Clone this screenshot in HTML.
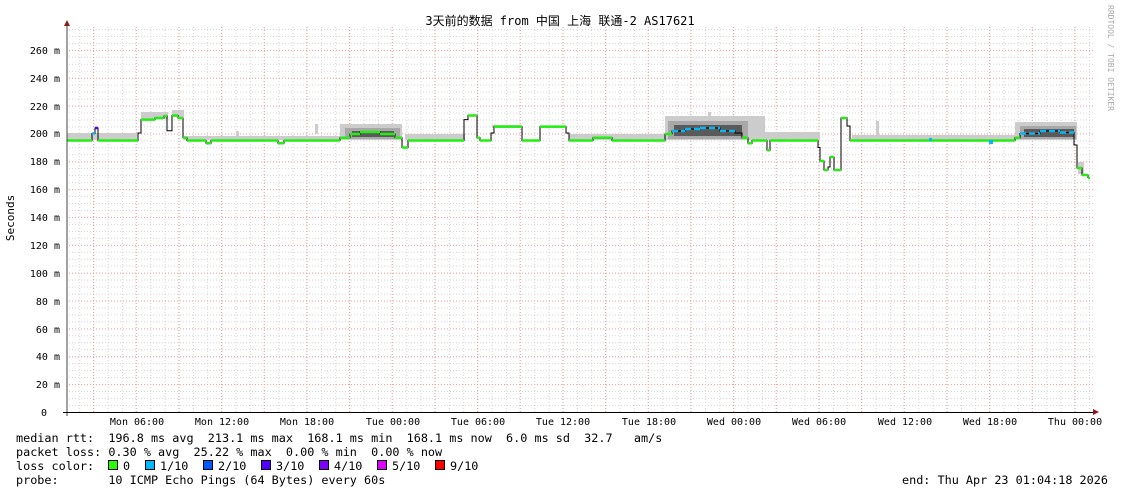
<!DOCTYPE html>
<html><head><meta charset="utf-8"><style>
html,body{margin:0;padding:0;background:#fff;}
svg{display:block;}
text{font-family:"DejaVu Sans Mono","Liberation Mono","Noto Sans CJK SC",monospace;fill:#000;white-space:pre;}
</style></head><body>
<svg width="1121" height="494" viewBox="0 0 1121 494" xmlns="http://www.w3.org/2000/svg" xml:space="preserve">
<defs>
<pattern id="vmin" patternUnits="userSpaceOnUse" x="79.22" y="0" width="14.222" height="3">
<line x1="0.5" y1="0" x2="0.5" y2="1" stroke="#d4d4d4" stroke-width="1"/></pattern>
<pattern id="hmin" patternUnits="userSpaceOnUse" x="0" y="8.08" width="3" height="6.9615">
<line x1="0" y1="0.5" x2="1" y2="0.5" stroke="#d4d4d4" stroke-width="1"/></pattern>
<pattern id="vmaj" patternUnits="userSpaceOnUse" x="93" y="0" width="42.667" height="3">
<line x1="0.5" y1="0" x2="0.5" y2="1" stroke="#f2a0a0" stroke-width="1"/></pattern>
<pattern id="hmaj" patternUnits="userSpaceOnUse" x="0" y="22.15" width="3" height="27.846">
<line x1="0" y1="0.5" x2="1" y2="0.5" stroke="#f2a0a0" stroke-width="1"/></pattern>
</defs>
<rect x="67" y="26" width="1026" height="386" fill="url(#vmin)"/>
<rect x="67" y="26" width="1026" height="386" fill="url(#hmin)"/>
<rect x="67" y="26" width="1026" height="386" fill="url(#vmaj)"/>
<rect x="67" y="26" width="1026" height="386" fill="url(#hmaj)"/>

<g fill="#cccccc">
<rect x="67" y="133" width="70" height="7"/>
<rect x="141" y="112" width="27" height="7"/>
<rect x="172" y="110" width="12" height="7"/>
<rect x="184" y="136" width="156" height="4"/>
<rect x="340" y="124" width="62" height="16"/>
<rect x="405" y="134" width="60" height="6"/>
<rect x="492" y="125" width="30" height="3"/>
<rect x="541" y="126" width="25" height="2"/>
<rect x="569" y="134" width="96" height="6"/>
<rect x="665" y="116" width="100" height="24"/>
<rect x="765" y="132" width="55" height="8"/>
<rect x="852" y="135" width="165" height="5"/>
<rect x="1015" y="122" width="62" height="18"/>
<rect x="1078" y="162" width="6" height="12"/>
<rect x="876" y="121" width="3" height="14"/>
<rect x="315" y="124" width="3" height="10"/>
<rect x="236" y="131" width="3" height="5"/>
<rect x="708" y="112" width="3" height="6"/>
</g>
<g fill="#a8a8a8">
<rect x="345" y="128" width="55" height="11"/>
<rect x="668" y="121" width="80" height="18"/>
<rect x="1020" y="126" width="56" height="13"/>
</g>
<g fill="#5a5a5a">
<rect x="352" y="131" width="42" height="6"/>
<rect x="674" y="125" width="68" height="11"/>
<rect x="1024" y="129" width="50" height="8"/>
</g>

<path d="M67,140.5H92V133.5H95V128H98V140.5H138V133H141V119.6H155V118H164V116H167V130.8H172V115.5H178V118H183V137.7H187V140.5H206V143.3H211V140.5H278V143.3H284V140.5H340V137.7H350V134H360V132H380V134H395V137.7H402V147.5H408V140.5H464V119.6H468V115.5H477V137.7H480V140.5H491V133H494V126.6H522V140.5H540V126.6H566V133H569V140.5H593V137.7H612V140.5H665V134H672V131H685V129H700V128H720V131H735V133H742V137.7H748V143.3H752V140.5H767V150.3H770V140.5H818V147.5H820V161H824V170H828V167H830V157H834V170H841V118H847V126H850V140.5H1015V137.7H1020V133.5H1040V131H1060V132.5H1074V145H1077V168H1082V175H1088V178" fill="none" stroke="#000" stroke-width="1"/>
<path d="M67,140.5H92M98,140.5H138M141,119.6H155M155,118H164M164,116H167M172,115.5H178M178,118H183M183,137.7H187M187,140.5H206M206,143.3H211M211,140.5H278M278,143.3H284M284,140.5H340M340,137.7H350M350,134H360M360,132H380M380,134H395M395,137.7H402M402,147.5H408M408,140.5H464M468,115.5H477M477,137.7H480M480,140.5H491M494,126.6H522M522,140.5H540M540,126.6H566M569,140.5H593M593,137.7H612M612,140.5H665M665,134H672M742,137.7H748M748,143.3H752M752,140.5H767M767,150.3H770M770,140.5H818M820,161H824M824,170H828M830,157H834M834,170H841M841,118H847M850,140.5H1015M1015,137.7H1020M1077,168H1082M1082,175H1088M1088,178H1090" fill="none" stroke="#22ee11" stroke-width="2.5"/>
<path d="M672,131H685M685,129H700M700,128H720M720,131H735M1020,133.5H1040M1040,131H1060M1060,132.5H1074M92,133.5H95" fill="none" stroke="#0cb4f0" stroke-width="2.5" stroke-dasharray="6 3"/>
<path d="M95,128H98" stroke="#5500ff" stroke-width="2.5"/>
<rect x="929" y="138" width="3" height="3" fill="#0cb4f0"/>
<rect x="989" y="140" width="4" height="4" fill="#0cb4f0"/>

<line x1="67" y1="24" x2="67" y2="416" stroke="#444" stroke-width="1"/>
<line x1="63" y1="412.5" x2="1095" y2="412.5" stroke="#000" stroke-width="1"/>
<polygon points="64,26 70,26 67,20" fill="#8b1a1a"/>
<polygon points="1093,409 1093,415 1099,412" fill="#8b1a1a"/>

<g font-size="10" text-anchor="end">
<text x="60" y="54">260 m</text><text x="60" y="82">240 m</text><text x="60" y="110">220 m</text>
<text x="60" y="137">200 m</text><text x="60" y="165">180 m</text><text x="60" y="193">160 m</text>
<text x="60" y="221">140 m</text><text x="60" y="249">120 m</text><text x="60" y="277">100 m</text>
<text x="60" y="305">80 m</text><text x="60" y="333">60 m</text><text x="60" y="360">40 m</text>
<text x="60" y="388">20 m</text><text x="47" y="416">0</text>
</g>
<g font-size="10" text-anchor="middle">
<text x="137" y="425">Mon 06:00</text><text x="222" y="425">Mon 12:00</text><text x="307" y="425">Mon 18:00</text>
<text x="393" y="425">Tue 00:00</text><text x="478" y="425">Tue 06:00</text><text x="563" y="425">Tue 12:00</text>
<text x="649" y="425">Tue 18:00</text><text x="734" y="425">Wed 00:00</text><text x="819" y="425">Wed 06:00</text>
<text x="905" y="425">Wed 12:00</text><text x="990" y="425">Wed 18:00</text><text x="1075" y="425">Thu 00:00</text>
</g>
<text x="560" y="25" font-size="12" text-anchor="middle">3天前的数据 from 中国 上海 联通-2 AS17621</text>
<text transform="translate(14,218) rotate(-90)" font-size="11" text-anchor="middle">Seconds</text>
<text transform="translate(1108,5) rotate(90)" font-size="8" style="fill:#aaa">RRDTOOL / TOBI OETIKER</text>

<g font-size="11.8">
<text x="16" y="442">median rtt:&#160;&#160;196.8 ms avg&#160;&#160;213.1 ms max&#160;&#160;168.1 ms min&#160;&#160;168.1 ms now&#160;&#160;6.0 ms sd&#160;&#160;32.7&#160;&#160;&#160;am/s</text>
<text x="16" y="456">packet loss: 0.30 % avg&#160;&#160;25.22 % max&#160;&#160;0.00 % min&#160;&#160;0.00 % now</text>
<text x="16" y="470">loss color:</text>
<text x="16" y="484">probe:&#160;&#160;&#160;&#160;&#160;&#160;&#160;10 ICMP Echo Pings (64 Bytes) every 60s</text>
<text x="902" y="484">end: Thu Apr 23 01:04:18 2026</text>
<text x="123" y="470">0</text><text x="160" y="470">1/10</text><text x="218" y="470">2/10</text>
<text x="276" y="470">3/10</text><text x="334" y="470">4/10</text><text x="392" y="470">5/10</text><text x="450" y="470">9/10</text>
</g>
<g stroke="#000" stroke-width="1">
<rect x="108.5" y="460.5" width="9" height="9" fill="#26ff00"/>
<rect x="145.5" y="460.5" width="9" height="9" fill="#00b8ff"/>
<rect x="203.5" y="460.5" width="9" height="9" fill="#0059ff"/>
<rect x="261.5" y="460.5" width="9" height="9" fill="#5500ff"/>
<rect x="319.5" y="460.5" width="9" height="9" fill="#7e00ff"/>
<rect x="377.5" y="460.5" width="9" height="9" fill="#dd00ff"/>
<rect x="435.5" y="460.5" width="9" height="9" fill="#ff0000"/>
</g>
</svg>
</body></html>
